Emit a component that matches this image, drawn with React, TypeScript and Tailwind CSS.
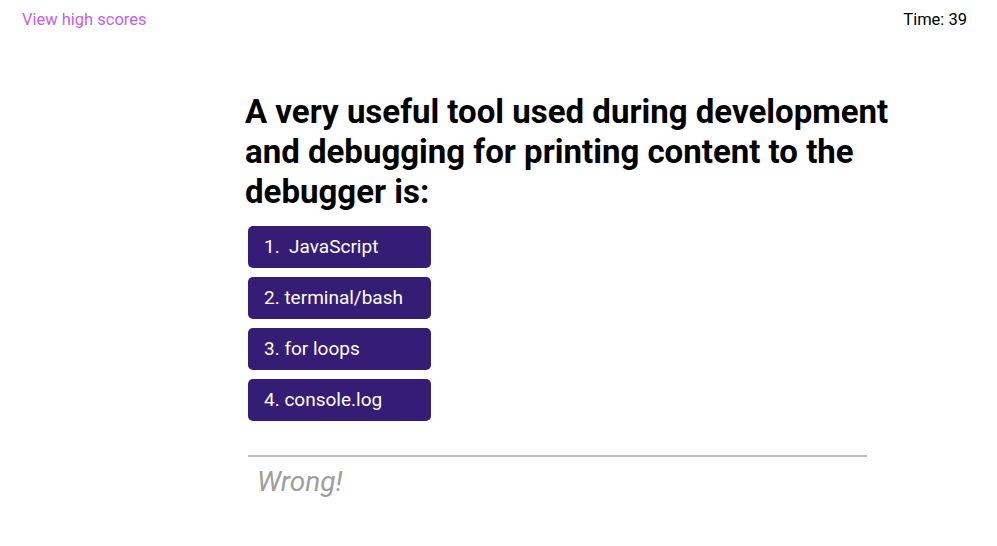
import React from "react";

export default function App() {
  const answers = ["1.  JavaScript", "2. terminal/bash", "3. for loops", "4. console.log"];
  return (
    <div className="min-h-[546px] w-full bg-white" style={{ fontFamily: "Roboto, 'Liberation Sans', sans-serif" }}>
      <header className="flex h-[40px] items-center justify-between pl-[22px] pr-[30px]">
        <a className="text-[16.5px] text-[#c35ff0]">View high scores</a>
        <span className="text-[16.5px] text-black">Time: 39</span>
      </header>
      <main className="ml-[245px] mt-[52px] w-[660px]">
        <h1 className="whitespace-pre-wrap text-[33px] font-bold leading-[40px] text-black">
          A very useful tool used during development and debugging for printing content to the debugger is:
        </h1>
        <div className="mt-[14px] flex flex-col gap-[9px] pl-[3px]">
          {answers.map((a) => (
            <button
              key={a}
              className="flex h-[42px] w-[183px] items-center whitespace-pre rounded-[5px] bg-[#351c75] pl-[16px] text-left text-[19px] text-white"
            >
              {a}
            </button>
          ))}
        </div>
        <div className="ml-[3px] mt-[34px] h-[2px] w-[619px] bg-[#bdbdbd]" />
        <p className="ml-[12px] mt-[9px] text-[28px] italic leading-[32px] text-[#9e9e9e]">Wrong!</p>
      </main>
    </div>
  );
}
